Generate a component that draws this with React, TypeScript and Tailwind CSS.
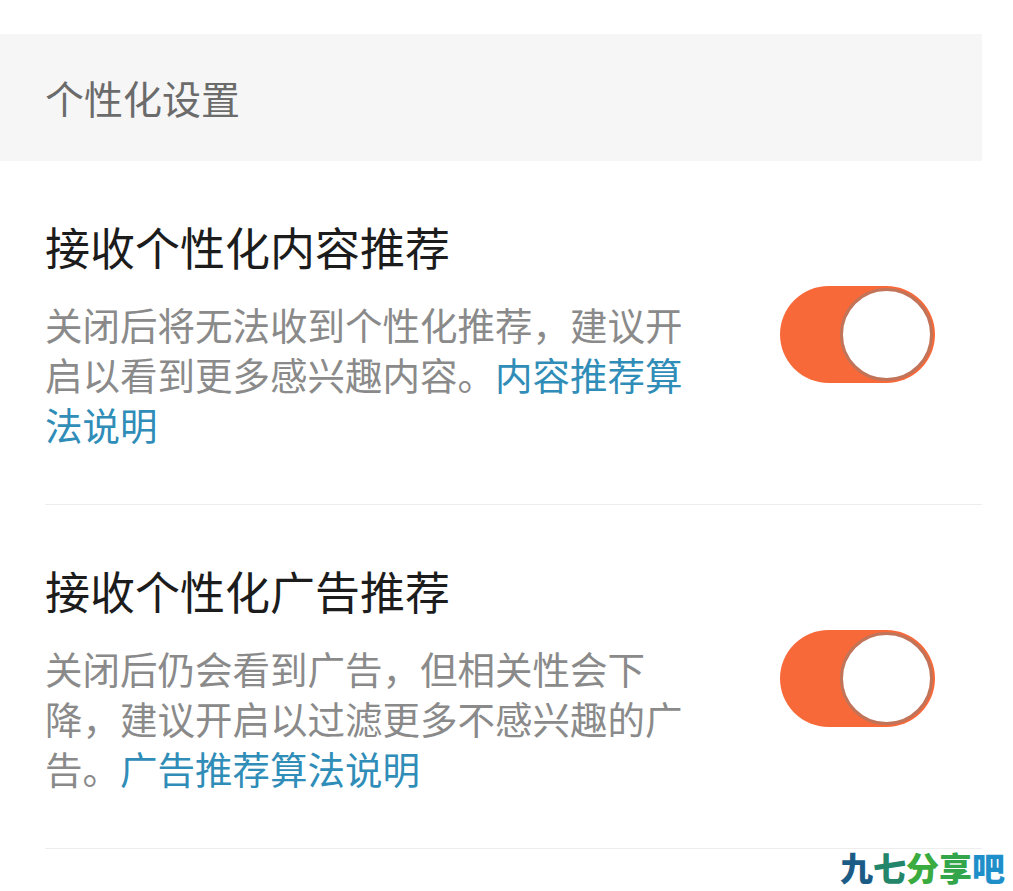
import { useState } from 'react';

const FONT = { fontFamily: '"Noto Sans CJK SC", "Noto Sans", sans-serif' };

type Item = {
  title: string;
  desc: string;
  link: string;
};

const ITEMS: Item[] = [
  {
    title: '接收个性化内容推荐',
    desc: '关闭后将无法收到个性化推荐，建议开启以看到更多感兴趣内容。',
    link: '内容推荐算法说明',
  },
  {
    title: '接收个性化广告推荐',
    desc: '关闭后仍会看到广告，但相关性会下降，建议开启以过滤更多不感兴趣的广告。',
    link: '广告推荐算法说明',
  },
];

function Toggle({ on, onChange }: { on: boolean; onChange: () => void }) {
  return (
    <button
      onClick={onChange}
      className={`flex h-[97px] w-[155px] shrink-0 items-center rounded-full p-[2px] transition-colors ${
        on ? 'bg-[#f8693a]' : 'bg-[#e5e5e5]'
      }`}
    >
      <span
        className={`h-[93px] w-[93px] rounded-full border-[3px] border-[#c27459] bg-white transition-all ${
          on ? 'ml-auto' : 'ml-0'
        }`}
      />
    </button>
  );
}

function SettingRow({ item }: { item: Item }) {
  const [on, setOn] = useState(true);

  return (
    <div className="pl-[45px]">
      <div className="flex items-center justify-between border-b border-[#ededed] pb-[55px] pr-[47px] pt-[58px]">
        <div className="w-[640px]">
          <div className="text-[45px] leading-[56px] text-[#1c1c1c]">{item.title}</div>
          <p className="mt-[24px] text-[37.5px] leading-[50px] text-[#8a8a8a]">
            {item.desc}
            <a className="text-[#2f8db8]">{item.link}</a>
          </p>
        </div>
        <Toggle on={on} onChange={() => setOn(!on)} />
      </div>
    </div>
  );
}

export default function App() {
  return (
    <div className="relative min-h-[891px] bg-white pt-[34px]" style={FONT}>
      <div className="w-[982px]">
        {/* Section header */}
        <div className="flex h-[127px] items-center bg-[#f6f6f6] pl-[45px]">
          <span className="text-[39px] text-[#6b6b6b]">个性化设置</span>
        </div>

        {ITEMS.map((item) => (
          <SettingRow key={item.title} item={item} />
        ))}
      </div>

      {/* Watermark */}
      <div className="absolute bottom-[4px] right-[8px] flex text-[33px] font-black leading-[40px]">
        <span className="text-[#1b5c87]">九</span>
        <span className="text-[#23856a]">七</span>
        <span className="text-[#3aab3f]">分</span>
        <span className="text-[#33a54a]">享</span>
        <span className="text-[#1f8fca]">吧</span>
      </div>
    </div>
  );
}
